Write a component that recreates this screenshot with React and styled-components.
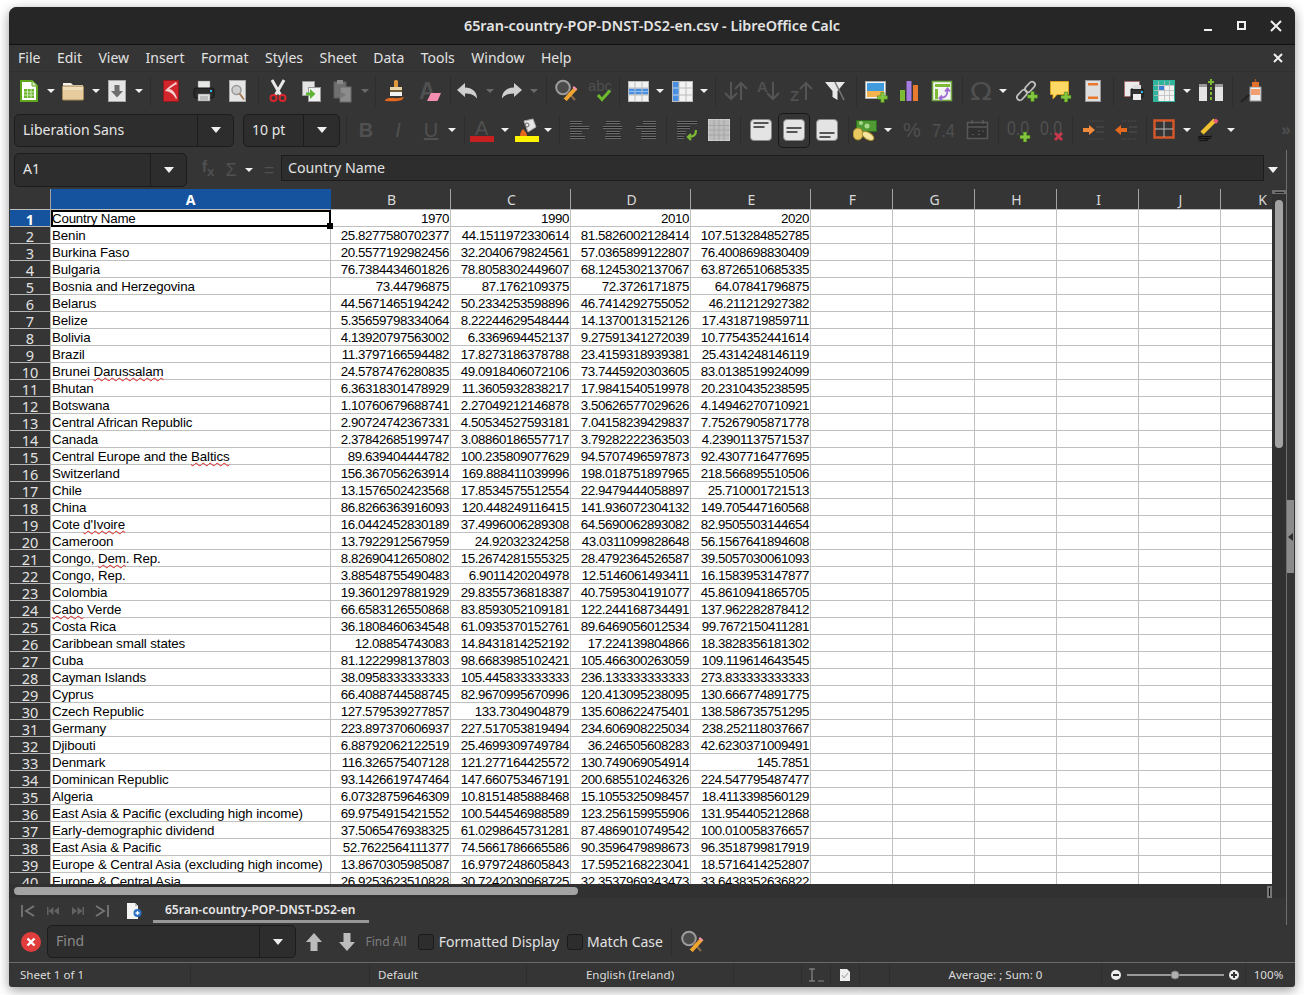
import React from 'react';
import styled, { createGlobalStyle } from 'styled-components';

const UI_FONT = '"Noto Sans", "Open Sans", sans-serif';

const GlobalStyle = createGlobalStyle`
    html, body { margin: 0; background: #fff; height: 100%; overflow: hidden; }
    body { font-family: ${UI_FONT}; }
`;

const Window = styled.div`
    width: 1286px;
    height: 980px;
    margin: 7px 0 0 9px;
    background: #353535;
    border-radius: 8px 8px 3px 3px;
    box-shadow: 0 3px 12px rgba(0, 0, 0, 0.4);
    display: flex;
    flex-direction: column;
    overflow: hidden;
    color: #eee;
`;

const TitleBar = styled.div`
    height: 37px;
    flex: none;
    background: #262626;
    border-bottom: 1px solid #111;
    position: relative;
    display: flex;
    align-items: center;
    justify-content: center;
    font-size: 14.4px;
    font-weight: 600;
    color: #e4e4e4;
`;
const WinControls = styled.div`
    position: absolute;
    right: 12px;
    top: 12px;
    display: flex;
    gap: 20px;
`;
const MenuBar = styled.div`
    height: 25px;
    padding: 0 10px 1px 9px;
    flex: none;
    display: flex;
    align-items: center;
    gap: 16.5px;
    font-size: 14px;
    color: #e2e2e2;
    border-bottom: 1px solid #2f2f2f;
`;
const MenuClose = styled.div`
    margin-left: auto;
    margin-right: 1px;
    display: flex;
`;
const ToolRow = styled.div`
    height: ${p => p.$h}px;
    flex: none;
    box-sizing: border-box;
    display: flex;
    align-items: center;
    padding-left: ${p => p.$pad || 0}px;
    padding-bottom: ${p => p.$bottom || 0}px;
`;
const Slot = styled.div`
    flex: none;
    width: ${p => p.$w}px;
    margin-left: ${p => p.$gap}px;
    display: flex;
    align-items: center;
    justify-content: center;
    white-space: nowrap;
`;
const Caret = styled.div`
    width: 0;
    height: 0;
    border-left: 4px solid transparent;
    border-right: 4px solid transparent;
    border-top: 4px solid ${p => (p.$off ? '#6a6a6a' : '#f0f0f0')};
`;
const CaretOff = () => <Caret $off />;
const Sep = styled.div`
    width: 1px;
    height: 30px;
    background: #2d2d2d;
`;
const Glyph = styled.span`
    font-family: "Liberation Sans", sans-serif;
    font-size: ${p => p.$size || 20}px;
    font-weight: ${p => p.$weight || 400};
    font-style: ${p => p.$italic ? 'italic' : 'normal'};
    text-decoration: ${p => p.$under ? 'underline' : 'none'};
    color: #505050;
    line-height: 24px;
`;
const Combo = styled.div`
    height: ${p => p.$h || 33}px;
    width: ${p => p.$w}px;
    flex: none;
    box-sizing: border-box;
    display: flex;
    background: #2d2d2d;
    border: 1px solid #1c1c1c;
    border-radius: 5px;
    margin-left: ${p => p.$ml || 0}px;
`;
const ComboText = styled.div`
    flex: 1;
    min-width: 0;
    padding: 0 0 2px 8px;
    display: flex;
    align-items: center;
    font-size: 14px;
    color: ${p => p.$dim ? '#8a8a8a' : '#e6e6e6'};
`;
const ComboButton = styled.div`
    width: 35px;
    flex: none;
    border-left: 1px solid #1c1c1c;
    display: flex;
    align-items: center;
    justify-content: center;
`;
const BigCaret = styled(Caret)`
    border-left-width: 5.5px;
    border-right-width: 5.5px;
    border-top-width: 6px;
`;

const MainRow = styled.div`
    flex: none;
    display: flex;
    height: 775px;
`;
const MainColumn = styled.div`
    width: 1277px;
    flex: none;
    display: flex;
    flex-direction: column;
`;
const SideStrip = styled.div`
    flex: 1;
    border-left: 1px solid #6f6f6f;
    padding-top: 350px;
`;
const SideHandle = styled.div`
    width: 7px;
    height: 73px;
    background: #8b8b8b;
    display: flex;
    align-items: center;
    justify-content: center;
    &::before {
        content: '';
        border-top: 4px solid transparent;
        border-bottom: 4px solid transparent;
        border-right: 5px solid #2c2c2c;
    }
`;
const FormulaInput = styled.div`
    height: 26px;
    width: 983px;
    flex: none;
    box-sizing: border-box;
    margin: 0 0 3px 5px;
    background: #2d2d2d;
    border: 1px solid #1c1c1c;
    padding: 0 0 2px 6px;
    display: flex;
    align-items: center;
    font-size: 14.2px;
    color: #e2e2e2;
`;
const SheetRow = styled.div`
    height: 695px;
    flex: none;
    display: flex;
    padding-left: 1px;
`;
const Sheet = styled.div`
    width: 1262px;
    height: 695px;
    overflow: hidden;
    display: grid;
    grid-template-columns: 41px 280px repeat(4, 120px) repeat(6, 82px);
    grid-template-rows: 21px;
    grid-auto-rows: 17px;
    background: #fff;
`;
const ColHead = styled.div`
    box-sizing: border-box;
    background: ${p => (p.$active ? '#15539e' : '#353535')};
    color: ${p => (p.$active ? '#fff' : '#d8d8d8')};
    font-weight: ${p => (p.$active ? 700 : 400)};
    border-right: 1px solid ${p => (p.$active ? '#15539e' : '#a2a2a2')};
    border-bottom: 1px solid #bdbdbd;
    padding-left: ${p => (p.$active ? 0 : 2)}px;
    font-size: 14px;
    display: flex;
    align-items: center;
    justify-content: center;
`;
const RowHead = styled.div`
    box-sizing: border-box;
    background: ${p => (p.$active ? '#15539e' : '#353535')};
    color: ${p => (p.$active ? '#fff' : '#e2e2e2')};
    font-weight: ${p => (p.$active ? 700 : 400)};
    border-right: 1px solid #b5b5b5;
    border-bottom: 1px solid #b5b5b5;
    padding-top: 2px;
    font-size: 14.5px;
    line-height: 14px;
    text-align: center;
    overflow: hidden;
`;
const Cell = styled.div`
    box-sizing: border-box;
    border-right: 1px solid #c0c0c0;
    border-bottom: 1px solid #c0c0c0;
    font-family: "Liberation Sans", Arial, sans-serif;
    font-size: 13.33px;
    letter-spacing: ${p => (p.$num ? -0.41 : -0.11)}px;
    line-height: 17px;
    height: 17px;
    color: #000;
    padding: 0 1px;
    white-space: nowrap;
    text-align: ${p => (p.$num ? 'right' : 'left')};
    overflow: ${p => (p.$num ? 'hidden' : 'visible')};
    display: ${p => (p.$num ? 'flex' : 'block')};
    justify-content: flex-end;
`;
const CursorCell = styled(Cell)`
    border: 2px solid #000;
    position: relative;
    line-height: 14px;
    padding-left: 0;
    text-indent: -1px;
    letter-spacing: -0.2px;
    &::after {
        content: '';
        position: absolute;
        right: -4px;
        bottom: -4px;
        width: 6px;
        height: 6px;
        background: #000;
    }
`;
const Misspelt = styled.span`
    text-decoration: underline wavy #e02020 1px;
    text-underline-offset: 1px;
`;
const VScroll = styled.div`
    width: 14px;
    flex: none;
    background: #313131;
    padding-top: 1px;
    display: flex;
    flex-direction: column;
`;
const SplitTop = styled.div`
    height: 4px;
    width: 14px;
    background: #6e6e6e;
    display: flex;
    align-items: center;
    justify-content: center;
    &::before { content: ''; width: 9px; height: 1px; background: #222; }
`;
const VThumb = styled.div`
    width: 8px;
    height: 248px;
    margin: 6px 0 0 3px;
    background: #a3a3a3;
    border-radius: 4px;
`;
const HScrollRow = styled.div`
    height: 14px;
    flex: none;
    position: relative;
    background: #313131;
    display: flex;
    align-items: center;
    padding-left: 5px;
`;
const HThumb = styled.div`
    width: 564px;
    height: 8px;
    background: #a3a3a3;
    border-radius: 4px;
`;
const HSplit = styled.div`
    position: absolute;
    right: 14px;
    top: 2px;
    width: 5px;
    height: 12px;
    background: #777;
    display: flex;
    align-items: center;
    justify-content: center;
    &::before { content: ''; width: 1px; height: 8px; background: #111; }
`;
const Tab = styled.div`
    height: 25px;
    box-sizing: border-box;
    width: 216px;
    border-bottom: 3px solid #989898;
    font-size: 12px;
    font-weight: 600;
    color: #e8e8e8;
    display: flex;
    align-items: center;
    padding-left: 12px;
`;
const FindLabel = styled.span`
    font-size: ${p => p.$size || 14}px;
    color: ${p => p.$dim ? '#7d7d7d' : '#e2e2e2'};
`;
const Checkbox = styled.div`
    width: 16px;
    height: 16px;
    box-sizing: border-box;
    background: #2d2d2d;
    border: 1px solid #1a1a1a;
    border-radius: 3px;
`;
const FindBar = styled(ToolRow)`
    border-bottom: 1px solid #6a6a6a;
`;
const StatusBar = styled.div`
    flex: 1;
    display: flex;
    align-items: stretch;
    font-size: 11.6px;
    color: #dcdcdc;
    padding-bottom: 1px;
`;
const StatusCell = styled.div`
    width: ${p => p.$w}px;
    flex: none;
    box-sizing: border-box;
    padding-left: ${p => p.$pad || 0}px;
    padding-right: ${p => (p.$last ? 4 : 0)}px;
    display: flex;
    align-items: center;
    justify-content: ${p => p.$center ? 'center' : 'flex-start'};
    border-right: ${p => p.$last ? 'none' : '1px solid #2e2e2e'};
    white-space: nowrap;
`;

const Svg = ({ w = 24, h = 24, children }) => (
    <svg width={w} height={h} viewBox={`0 0 ${w} ${h}`} style={{ display: 'block', flex: 'none' }}>{children}</svg>
);

// cruzinha verde que vai em cima de varios icones
const Plus = ({ x, y, c = '#84c63f' }) => (
    <path d={`M${x - 1.7} ${y - 5}h3.4v3.3h3.3v3.4h-3.3v3.3h-3.4v-3.3h-3.3v-3.4h3.3z`} fill={c} stroke="#3f7d12" strokeWidth=".5" />
);
const SvgText = ({ x, y, size, bold, fill = '#505050', family = 'Liberation Sans', fit, children }) => (
    <text x={x} y={y} fontSize={size} fontWeight={bold ? 700 : 400} fontFamily={`${family}, sans-serif`} fill={fill} textLength={fit} lengthAdjust={fit ? 'spacingAndGlyphs' : undefined}>{children}</text>
);

const NewCalc = () => <Svg><path d="M4 2h11l5 5v15H4z" fill="#fff" stroke="#5fa61c" strokeWidth="2" /><path d="M15 2v5h5" fill="#dcecc4" stroke="#5fa61c" /><rect x="7" y="10" width="10" height="9" fill="#6ab52b" /><path d="M7 13h10M7 16h10M10.5 10v9M14 10v9" stroke="#e4f3d2" strokeWidth=".8" /></Svg>;
const OpenFolder = () => <Svg><path d="M2 4h8l2 2h10v3H2z" fill="#f6f2e8" /><rect x="1.5" y="7" width="21" height="14" rx="1" fill="#e6cc9c" stroke="#a78c5e" /><rect x="2" y="8" width="20" height="3" fill="#f0deba" /></Svg>;
const SaveDoc = () => <Svg><rect x="3.5" y="1.5" width="17" height="21" fill="#e6e6e6" stroke="#a8a8a8" /><path d="M9.5 6h5v6h3.5l-6 6.5L6 12h3.5z" fill="#6e6e6e" /></Svg>;
const PdfDoc = () => <Svg><rect x="4.5" y="1.5" width="15" height="21" fill="#d1262b" stroke="#8f1a1e" /><path d="M17 3C11 7 8 9 6 12c4 0 9 3 11 8l1-1c-2-6-5-9-8-9 3-2 5-4 8-5z" fill="#f4d0d0" /></Svg>;
const PrintDoc = () => <Svg><rect x="6" y="2" width="12" height="8" fill="#e8e8e8" stroke="#777" strokeWidth=".5" /><rect x="2" y="9" width="20" height="10" rx="2" fill="#2b2b2b" stroke="#151515" /><rect x="6" y="15" width="12" height="7" fill="#ddd" stroke="#777" strokeWidth=".5" /><path d="M8 18h8M8 20h8" stroke="#999" /><rect x="18" y="11" width="2" height="2" fill="#29b6e8" /></Svg>;
const Preview = () => <Svg><rect x="4.5" y="1.5" width="16" height="21" fill="#e6e6e6" stroke="#aaa" /><circle cx="11.5" cy="11" r="4.5" fill="#cfcfcf" stroke="#999" strokeWidth="1.5" /><path d="M14.5 14.5l4.5 6" stroke="#a58058" strokeWidth="2" /></Svg>;
const Scissors = () => <Svg><path d="M6 1l8.5 15M18 1L9.500 16" stroke="#e8e8e8" strokeWidth="3" /><circle cx="7.500" cy="19" r="3" fill="none" stroke="#d8262c" strokeWidth="2" /><circle cx="16.500" cy="19" r="3" fill="none" stroke="#d8262c" strokeWidth="2" /></Svg>;
const CopyDoc = () => <Svg><rect x="3.500" y="2.500" width="12" height="14" fill="#e4e4e4" stroke="#999" /><rect x="9.500" y="8.500" width="12" height="14" fill="#f2f2f2" stroke="#999" /><path d="M7 13.500h4V10l5.500 5-5.500 5v-3.500H7z" fill="#5fb336" /></Svg>;
const PasteDoc = () => <Svg><rect x="4" y="3" width="12" height="16" fill="#707070" stroke="#5e5e5e" /><rect x="7" y="1" width="6" height="4" fill="#8a8a8a" /><rect x="10" y="8" width="11" height="15" fill="#8c8c8c" stroke="#6a6a6a" /><path d="M11 13v6l5-3z" fill="#777" /></Svg>;
const Clone = () => <Svg><rect x="10" y="1" width="4" height="8" rx="1.500" fill="#e09a3b" /><rect x="6" y="8" width="12" height="3" fill="#e6d4a8" /><rect x="6" y="11" width="12" height="2" fill="#6d5a38" /><rect x="6" y="13" width="12" height="4" fill="#f2f2f2" /><path d="M1 21c5-4 9 0 19-3l-2 3c-6 2-12 1-17 1z" fill="#e2691e" /></Svg>;
const ClearFmt = () => <Svg><SvgText x="1" y="20" size="23" bold>A</SvgText><path d="M13 14h10l-3.500 8H9z" fill="#f48fb1" /></Svg>;
const Undo = () => <Svg><path d="M2 11l8-7v4.500c7 0 12 4 12 11-3-4-7-5-12-5V18z" fill="#cfcfcf" /></Svg>;
const Redo = () => <Svg><path d="M22 11l-8-7v4.500c-7 0-12 4-12 11 3-4 7-5 12-5V18z" fill="#cfcfcf" /></Svg>;
const FindReplace = () => <Svg><circle cx="9" cy="8.500" r="6.800" fill="#8a8a8a44" stroke="#9c9c9c" strokeWidth="2" /><path d="M14 13l7 8" stroke="#8a6a4a" strokeWidth="2" /><path d="M22 9L11 21" stroke="#f0a52e" strokeWidth="4" /><path d="M20 7l3 3-1.500 1.500-3-3z" fill="#f48fb1" /><path d="M9.500 19.500l3 2.500-4 1z" fill="#333" /></Svg>;
const Spell = () => <Svg><SvgText x="0" y="12" size="14" fit={24}>abc</SvgText><path d="M10 16l4 4.500 8-9" fill="none" stroke="#6dbb2c" strokeWidth="3" /></Svg>;
const TableRows = () => <Svg><rect x="2.500" y="2.500" width="20" height="20" fill="#f2f2f2" stroke="#bbb" /><rect x="3" y="9.500" width="19" height="6" fill="#4a90e2" /><path d="M2.500 9h20M2.500 16h20M9 2.500v20M16 2.500v20" stroke="#bbb" /><path d="M3 12.500h19" stroke="#8fc0f5" /></Svg>;
const TableCols = () => <Svg><rect x="2.500" y="2.500" width="20" height="20" fill="#f2f2f2" stroke="#bbb" /><rect x="3" y="3" width="6" height="19" fill="#4a90e2" /><path d="M2.500 9h20M2.500 16h20M9 2.500v20M16 2.500v20" stroke="#bbb" /><path d="M3 9h6M3 16h6" stroke="#8fc0f5" /></Svg>;
const DimDown = ({ x }) => <path d={`M${x} 3v17M${x - 6} 14l6 6 6-6`} fill="none" stroke="#555" strokeWidth="2" />;
const DimUp = ({ x }) => <path d={`M${x} 21V4M${x - 6} 10l6-6 6 6`} fill="none" stroke="#555" strokeWidth="2" />;
const SortBoth = () => <Svg><DimDown x={7} /><DimUp x={17} /></Svg>;
const SortAsc = () => <Svg><SvgText x="0" y="13" size="15" bold>A</SvgText><DimDown x={16} /></Svg>;
const SortDesc = () => <Svg><SvgText x="0" y="22" size="15" bold>Z</SvgText><DimUp x={16} /></Svg>;
const Filter = () => <Svg><path d="M2 3h20l-7.500 9v9l-5-3v-6z" fill="#e8e8e8" /><path d="M12 3l9 18" stroke="#777" strokeWidth="1.500" /></Svg>;
const InsertImage = () => <Svg><rect x="1.500" y="2.500" width="20" height="17" fill="#f4f4f4" stroke="#aaa" /><rect x="3" y="4" width="17" height="8" fill="#3f9bdc" /><rect x="3" y="12" width="17" height="6" fill="#f2b24e" /><Plus x={18.500} y={18.500} /></Svg>;
const Chart = () => <Svg><rect x="3" y="11" width="5" height="11" fill="#7dbb35" /><rect x="9.500" y="2" width="5" height="20" fill="#a67be0" /><rect x="16" y="6" width="5" height="16" fill="#e87a30" /></Svg>;
const Pivot = () => <Svg><rect x="2.500" y="2.500" width="19" height="19" fill="#f4f4f4" stroke="#6fa83c" strokeWidth="1.500" /><rect x="5" y="5" width="15" height="3" fill="#7dbb35" /><rect x="5" y="10" width="3" height="10" fill="#7dbb35" /><path d="M10 19c6 0 7.500-3 7.500-8M15 12.500l2.500-3 2.500 3M12 16.500L9.500 19l2.500 2.500" fill="none" stroke="#9b6bd0" strokeWidth="1.800" /></Svg>;
const Omega = () => <Svg><SvgText x="1" y="21" size="25" family="DejaVu Sans" fit={22}>Ω</SvgText></Svg>;
const LinkIcon = () => <Svg><rect x="1" y="13" width="12" height="6" rx="3" fill="none" stroke="#bcbcbc" strokeWidth="1.800" transform="rotate(-48 7 16)" /><rect x="9" y="5" width="12" height="6" rx="3" fill="none" stroke="#bcbcbc" strokeWidth="1.800" transform="rotate(-48 15 8)" /><Plus x={17.500} y={17.500} /></Svg>;
const CommentIcon = () => <Svg><path d="M2.500 2.500h18v13H9L5 20v-4.500H2.500z" fill="#ffd966" stroke="#d9a520" /><Plus x={18} y={18} /></Svg>;
const HeaderIcon = () => <Svg><rect x="4.500" y="1.500" width="15" height="21" fill="#dedede" stroke="#999" /><rect x="7" y="4" width="10" height="2.500" fill="#e8762c" /><rect x="7" y="17.500" width="10" height="2.500" fill="#e8762c" /></Svg>;
const PrintArea = () => <Svg><rect x="2.500" y="2.500" width="15" height="15" fill="#ebebeb" stroke="#c05050" strokeDasharray="1 1" /><path d="M9 10h12v8H9z" fill="#333" stroke="#1b1b1b" /><rect x="11" y="6" width="8" height="4" fill="#ddd" /><rect x="11" y="15" width="8" height="6" fill="#eee" /><rect x="19" y="12" width="2" height="2" fill="#29b6e8" /></Svg>;
const TealTable = () => <Svg><rect x="1.500" y="1.500" width="21" height="21" fill="#f2f2f2" stroke="#2fb39b" /><rect x="2" y="2" width="20" height="4" fill="#2fb39b" /><rect x="2" y="6" width="4" height="16" fill="#2fb39b" /><rect x="7" y="7" width="5" height="4" fill="#3b7fd4" /><path d="M2 6.500h20M2 11.500h20M2 16.500h20M6.500 2v20M12.500 2v20M17.500 2v20" stroke="#bdbdbd" strokeWidth=".8" /></Svg>;
const SplitIcon = () => <Svg><rect x="0" y="5" width="8" height="17" fill="#e4e4e4" /><rect x="0" y="5" width="8" height="3" fill="#999" /><rect x="16" y="5" width="8" height="17" fill="#e4e4e4" /><rect x="16" y="5" width="8" height="3" fill="#999" /><path d="M12 8v14" stroke="#7dbb35" strokeWidth="2" strokeDasharray="3 2" /><path d="M12 0v6M9 3h6" stroke="#7dbb35" strokeWidth="2" /></Svg>;
const StylesIcon = () => <Svg><rect x="10" y="8" width="11" height="14" fill="#eee" stroke="#999" /><rect x="11" y="10" width="9" height="6" fill="#f0a070" /><rect x="12" y="3" width="7" height="5" fill="#e0702c" /><path d="M15.500 0v3" stroke="#a5512a" strokeWidth="1.500" /><path d="M1 23l8-7" stroke="#222" strokeWidth="2" /></Svg>;

const ColorA = () => <Svg><SvgText x="5" y="17" size="20">A</SvgText><rect x="0" y="18" width="24" height="6" fill="#c82020" /></Svg>;
const Bucket = () => <Svg><path d="M9 3l9-2 3 8-8 5z" fill="#e6e6e6" stroke="#aaa" /><circle cx="12" cy="7" r="2" fill="none" stroke="#666" /><path d="M8 11c2 2 4 4 4 7H5c0-3 1-5 3-7z" fill="#e2691e" /><rect x="0" y="18" width="24" height="6" fill="#fdf200" /></Svg>;
const lines = (spec) => spec.map(([x, y, w], i) => <path key={i} d={`M${x} ${y + 0.5}h${w}`} stroke="#6a6a6a" strokeWidth="3" />);
const linesIn = (spec) => spec.map(([x, y, w], i) => <path key={i} d={`M${x} ${y + 0.5}h${w}`} stroke="#1b1b1b" strokeWidth="1" />);
const AlignIcon = ({ spec }) => <Svg>{lines(spec)}{linesIn(spec)}</Svg>;
const AlignLeft = () => <AlignIcon spec={[[2, 4, 12], [2, 9, 19], [2, 14, 12], [2, 19, 15]]} />;
const AlignCenter = () => <AlignIcon spec={[[5, 4, 14], [2, 9, 19], [5, 14, 14], [4, 19, 16]]} />;
const AlignRight = () => <AlignIcon spec={[[9, 4, 13], [2, 9, 20], [7, 14, 15], [7, 19, 15]]} />;
const WrapIcon = () => <Svg>{lines([[2, 4, 20], [2, 9, 13], [2, 14, 9], [2, 19, 7]])}{linesIn([[2, 4, 20], [2, 9, 13], [2, 14, 9], [2, 19, 7]])}<path d="M21 12c0 5-3 7-7 7M16 16l-3 3 3 3" fill="none" stroke="#7dbb35" strokeWidth="2.200" /></Svg>;
const Merge = () => <Svg><rect x="1.500" y="1.500" width="21" height="21" fill="#bdbdbd" stroke="#cfcfcf" /><path d="M1.500 7.500h21M1.500 12h21M1.500 17h21M7 1.500v21M12 1.500v21M17 1.500v21" stroke="#a6a6a6" /></Svg>;
const VAlign = ({ y }) => <Svg><rect x="1.500" y="1.500" width="21" height="21" rx="3.500" fill="#e4e4e4" stroke="#8a8a8a" /><path d={`M4.500 ${y}h15M4.500 ${y + 4}h11`} stroke="#555" strokeWidth="2" /></Svg>;
const VTop = () => <VAlign y={5} />;
const VMid = () => <VAlign y={10} />;
const VBot = () => <VAlign y={15} />;
const ActiveFrame = styled.div`
    width: 32px;
    height: 33px;
    border: 1px solid #181818;
    border-radius: 5px;
    display: flex;
    align-items: center;
    justify-content: center;
`;
const VMidActive = () => <ActiveFrame><VMid /></ActiveFrame>;
const Currency = () => <Svg><rect x="3.500" y="2.500" width="20" height="11" fill="#4f9a34" stroke="#2f6b1c" /><circle cx="8" cy="5" r="2" fill="#a8d88a" /><circle cx="14" cy="8" r="2.500" fill="#a8d88a" /><ellipse cx="5" cy="16" rx="5" ry="6" fill="#e8c860" stroke="#a98c2c" /><ellipse cx="15" cy="18" rx="6.500" ry="3.500" fill="#f4e6a0" transform="rotate(30 15 18)" stroke="#a98c2c" /></Svg>;
const Percent = () => <Glyph $size={20}>%</Glyph>;
const NumFmt = () => <Svg w={26} h={24}><SvgText x="0" y="19" size="19" fit={23}>7.4</SvgText></Svg>;
const DateIcon = () => <Svg><rect x="1.500" y="4.500" width="20" height="16" fill="#2f2f2f" stroke="#585858" strokeWidth="1.500" /><path d="M6 2v4M17 2v4M2 9h19" stroke="#585858" strokeWidth="1.500" /><path d="M12 13h2M16 13h2M6 16.500h2M12 16.500h2" stroke="#585858" /></Svg>;
const AddDecimal = () => <Svg><SvgText x="0" y="17" size="20" fit={22}>0.0</SvgText><Plus x={18} y={19} /></Svg>;
const DelDecimal = () => <Svg><SvgText x="0" y="17" size="20" fit={22}>0.0</SvgText><path d="M15 15l7 7M22 15l-7 7" stroke="#c8384c" strokeWidth="2.800" /></Svg>;
const Indent = () => <Svg><path d="M2 10h6V7l6 5-6 5v-3H2z" fill="#f08a3c" /><path d="M15 9h8M15 14h8" stroke="#666" strokeWidth="2" /><path d="M15 9h8M15 14h8" stroke="#1f1f1f" /><path d="M8 3h14M8 21h14" stroke="#4a4a4a" strokeDasharray="2 1" /></Svg>;
const Outdent = () => <Svg><path d="M13 10H7V7l-6 5 6 5v-3h6z" fill="#e2691e" /><path d="M15 9h8M15 14h8" stroke="#666" strokeWidth="2" /><path d="M15 9h8M15 14h8" stroke="#1f1f1f" /><path d="M8 3h14M8 21h14" stroke="#4a4a4a" strokeDasharray="2 1" /></Svg>;
const Borders = () => <Svg><rect x="2.500" y="2.500" width="19" height="17" fill="none" stroke="#d4562a" strokeWidth="2.500" /><path d="M12 3v16M3 11h18" stroke="#b8b8b8" strokeWidth="1" /></Svg>;
const LineIcon = () => <Svg><path d="M18 2L5 15" stroke="#f0c030" strokeWidth="4.500" /><path d="M16 3l3-2.500 2.500 2.500-2.500 3z" fill="#e85a7a" /><path d="M3 14l3 3-4 1z" fill="#333" /><path d="M1 19c4-2 8 1 14-1M1 21c4-2 8 1 13-1M2 23c3-1 6 0 9-1" fill="none" stroke="#111" strokeWidth="1.200" /></Svg>;

const NavFirst = () => <Svg w={16} h={16}><path d="M2 2v12M14 3L6 8l8 5" fill="none" stroke="#767676" strokeWidth="1.800" /></Svg>;
const NavPrev = () => <Svg w={16} h={16}><path d="M2 4h1.500v8H2zM8.500 4v8L3.500 8zM14 4v8L9 8z" fill="#626262" /></Svg>;
const NavNext = () => <Svg w={16} h={16}><path d="M14 4h-1.500v8H14zM7.500 4v8l5-4zM2 4v8l5-4z" fill="#626262" /></Svg>;
const NavLast = () => <Svg w={16} h={16}><path d="M14 2v12M2 3l8 5-8 5" fill="none" stroke="#767676" strokeWidth="1.800" /></Svg>;
const NewSheet = () => <Svg w={16} h={16}><path d="M1 0h8l3 3v13H1z" fill="#f4f4f4" /><path d="M9 0v3h3" fill="#bbb" /><circle cx="11.500" cy="10" r="4" fill="#2a6fc0" /><path d="M11.500 8v4M9.500 10h4" stroke="#fff" strokeWidth="1.300" /></Svg>;
const CloseFind = () => <Svg w={20} h={20}><circle cx="10" cy="10" r="10" fill="#e23d3d" /><path d="M6.500 6.500l7 7M13.500 6.500l-7 7" stroke="#fff" strokeWidth="2.400" /></Svg>;
const ArrowUp = () => <Svg w={18} h={20}><path d="M9 1l8 9h-4.500v9h-7v-9H1z" fill="#bcbcbc" /></Svg>;
const ArrowDown = () => <Svg w={18} h={20}><path d="M9 19l8-9h-4.500V1h-7v9H1z" fill="#bcbcbc" /></Svg>;

const CloseX = ({ s = 12 }) => <Svg w={s} h={s}><path d={`M2 2L${s - 2} ${s - 2}M${s - 2} 2L2 ${s - 2}`} stroke="#f0f0f0" strokeWidth="2" /></Svg>;
const MinBtn = () => <Svg w={14} h={14}><rect x="3" y="10" width="8" height="2" fill="#f0f0f0" /></Svg>;
const MaxBtn = () => <Svg w={14} h={14}><rect x="3" y="3" width="7" height="7" fill="none" stroke="#f0f0f0" strokeWidth="2" /></Svg>;

const FxText = () => <Glyph $size={16} $weight={700}>f<sub>x</sub></Glyph>;
const SumText = () => <Glyph $size={18}>Σ</Glyph>;
const EqText = () => <Glyph $size={18}>=</Glyph>;
const BoldBtn = () => <Glyph $weight={700}>B</Glyph>;
const ItalicBtn = () => <Glyph $italic>I</Glyph>;
const UnderBtn = () => <Glyph $under>U</Glyph>;

const OverflowMark = () => <Glyph $size={17} $weight={700}>»</Glyph>;

// coloca os items em fluxo, com o espaco calculado a partir do centro de cada um
const Flow = ({ start, items }) => {
    let cursor = start;
    return items.map(([Comp, x, w = 24], i) => {
        const gap = x - w / 2 - cursor;
        cursor = x + w / 2;
        return <Slot key={i} $w={w} $gap={gap}><Comp /></Slot>;
    });
};

const tools1 = [
    [NewCalc, 29], [Caret, 51, 8], [OpenFolder, 73], [Caret, 96, 8], [SaveDoc, 117], [Caret, 139, 8], [Sep, 150, 1],
    [PdfDoc, 171], [PrintDoc, 204], [Preview, 237], [Sep, 258, 1],
    [Scissors, 278], [CopyDoc, 311], [PasteDoc, 342], [CaretOff, 365, 8], [Sep, 375, 1],
    [Clone, 396], [ClearFmt, 430], [Sep, 450, 1],
    [Undo, 467], [CaretOff, 490, 8], [Redo, 512], [CaretOff, 534, 8], [Sep, 546, 1],
    [FindReplace, 566], [Spell, 600], [Sep, 619, 1],
    [TableRows, 638], [Caret, 660, 8], [TableCols, 682], [Caret, 704, 8], [Sep, 715, 1],
    [SortBoth, 736], [SortAsc, 769], [SortDesc, 802], [Filter, 835], [Sep, 856, 1],
    [InsertImage, 876], [Chart, 909], [Pivot, 942], [Sep, 962, 1],
    [Omega, 981], [Caret, 1003, 8], [LinkIcon, 1027], [CommentIcon, 1060], [HeaderIcon, 1093], [Sep, 1113, 1],
    [PrintArea, 1134], [TealTable, 1164], [Caret, 1187, 8], [SplitIcon, 1211], [Sep, 1232, 1],
    [StylesIcon, 1252],
];

const tools2 = [
    [Sep, 346, 1], [BoldBtn, 366, 16], [ItalicBtn, 398, 16], [UnderBtn, 431, 16], [Caret, 452, 8], [Sep, 464, 1],
    [ColorA, 482], [Caret, 505, 8], [Bucket, 527], [Caret, 548, 8], [Sep, 559, 1],
    [AlignLeft, 580], [AlignCenter, 613], [AlignRight, 646], [Sep, 666, 1],
    [WrapIcon, 687], [Merge, 719], [Sep, 740, 1],
    [VTop, 761], [VMidActive, 794, 32], [VBot, 827], [Sep, 848, 1],
    [Currency, 865], [Caret, 888, 8], [Percent, 912, 20], [NumFmt, 945, 26], [DateIcon, 978], [Sep, 998, 1],
    [AddDecimal, 1019], [DelDecimal, 1052], [Sep, 1072, 1],
    [Indent, 1093], [Outdent, 1126], [Sep, 1146, 1],
    [Borders, 1164], [Caret, 1187, 8], [LineIcon, 1209], [Caret, 1231, 8],
    [OverflowMark, 1286, 12],
];

const formulaTools = [[FxText, 208, 18], [SumText, 231, 14], [Caret, 249, 8], [EqText, 269, 14]];

const FindField = () => (
    <Combo $w={249}>
        <ComboText $dim>Find</ComboText>
        <ComboButton><BigCaret /></ComboButton>
    </Combo>
);
const FindAllLabel = () => <FindLabel $dim $size={12}>Find All</FindLabel>;
const FormattedLabel = () => <FindLabel>Formatted Display</FindLabel>;
const MatchLabel = () => <FindLabel>Match Case</FindLabel>;

const findItems = [
    [CloseFind, 31, 20], [FindField, 171.5, 249], [ArrowUp, 314, 18], [ArrowDown, 347, 18], [FindAllLabel, 386, 44],
    [Checkbox, 426, 16], [FormattedLabel, 499, 124], [Checkbox, 575, 16], [MatchLabel, 625, 80], [Sep, 671, 1], [FindReplace, 692],
];

const FirstTab = () => <Tab>65ran-country-POP-DNST-DS2-en</Tab>;
const tabItems = [[NavFirst, 28, 16], [NavPrev, 53, 16], [NavNext, 78, 16], [NavLast, 102, 16], [NewSheet, 134, 16], [FirstTab, 261, 216]];

const columns = ['A', 'B', 'C', 'D', 'E', 'F', 'G', 'H', 'I', 'J', 'K'];

const rows = [
    [<>Benin</>, '25.8277580702377', '44.1511972330614', '81.5826002128414', '107.513284852785'],
    [<>Burkina Faso</>, '20.5577192982456', '32.2040679824561', '57.0365899122807', '76.4008698830409'],
    [<>Bulgaria</>, '76.7384434601826', '78.8058302449607', '68.1245302137067', '63.8726510685335'],
    [<>Bosnia and Herzegovina</>, '73.44796875', '87.1762109375', '72.3726171875', '64.07841796875'],
    [<>Belarus</>, '44.5671465194242', '50.2334253598896', '46.7414292755052', '46.211212927382'],
    [<>Belize</>, '5.35659798334064', '8.22244629548444', '14.1370013152126', '17.4318719859711'],
    [<>Bolivia</>, '4.13920797563002', '6.3369694452137', '9.27591341272039', '10.7754352441614'],
    [<>Brazil</>, '11.3797166594482', '17.8273186378788', '23.4159318939381', '25.4314248146119'],
    [<>Brunei <Misspelt>Darussalam</Misspelt></>, '24.5787476280835', '49.0918406072106', '73.7445920303605', '83.0138519924099'],
    [<>Bhutan</>, '6.36318301478929', '11.3605932838217', '17.9841540519978', '20.2310435238595'],
    [<>Botswana</>, '1.10760679688741', '2.27049212146878', '3.50626577029626', '4.14946270710921'],
    [<>Central African Republic</>, '2.90724742367331', '4.50534527593181', '7.04158239429837', '7.75267905871778'],
    [<>Canada</>, '2.37842685199747', '3.08860186557717', '3.79282222363503', '4.23901137571537'],
    [<>Central Europe and the <Misspelt>Baltics</Misspelt></>, '89.639404444782', '100.235809077629', '94.5707496597873', '92.4307716477695'],
    [<>Switzerland</>, '156.367056263914', '169.888411039996', '198.018751897965', '218.566895510506'],
    [<>Chile</>, '13.1576502423568', '17.8534575512554', '22.9479444058897', '25.710001721513'],
    [<>China</>, '86.8266363916093', '120.448249116415', '141.936072304132', '149.705447160568'],
    [<>Cote <Misspelt>d'Ivoire</Misspelt></>, '16.0442452830189', '37.4996006289308', '64.5690062893082', '82.9505503144654'],
    [<>Cameroon</>, '13.7922912567959', '24.92032324258', '43.0311099828648', '56.1567641894608'],
    [<>Congo, <Misspelt>Dem</Misspelt>. Rep.</>, '8.82690412650802', '15.2674281555325', '28.4792364526587', '39.5057030061093'],
    [<>Congo, Rep.</>, '3.88548755490483', '6.9011420204978', '12.5146061493411', '16.1583953147877'],
    [<>Colombia</>, '19.3601297881929', '29.8355736818387', '40.7595304191077', '45.8610941865705'],
    [<><Misspelt>Cabo</Misspelt> Verde</>, '66.6583126550868', '83.8593052109181', '122.244168734491', '137.962282878412'],
    [<>Costa Rica</>, '36.1808460634548', '61.0935370152761', '89.6469056012534', '99.7672150411281'],
    [<>Caribbean small states</>, '12.08854743083', '14.8431814252192', '17.224139804866', '18.3828356181302'],
    [<>Cuba</>, '81.1222998137803', '98.6683985102421', '105.466300263059', '109.119614643545'],
    [<>Cayman Islands</>, '38.0958333333333', '105.445833333333', '236.133333333333', '273.833333333333'],
    [<>Cyprus</>, '66.4088744588745', '82.9670995670996', '120.413095238095', '130.666774891775'],
    [<>Czech Republic</>, '127.579539277857', '133.7304904879', '135.608622475401', '138.586735751295'],
    [<>Germany</>, '223.897370606937', '227.517053819494', '234.606908225034', '238.252118037667'],
    [<>Djibouti</>, '6.88792062122519', '25.4699309749784', '36.246505608283', '42.6230371009491'],
    [<>Denmark</>, '116.326575407128', '121.277164425572', '130.749069054914', '145.7851'],
    [<>Dominican Republic</>, '93.1426619747464', '147.660753467191', '200.685510246326', '224.547795487477'],
    [<>Algeria</>, '6.07328759646309', '10.8151485888468', '15.1055325098457', '18.4113398560129'],
    [<>East Asia &amp; Pacific (excluding high income)</>, '69.9754915421552', '100.544546988589', '123.256159955906', '131.954405212868'],
    [<>Early-demographic dividend</>, '37.5065476938325', '61.0298645731281', '87.4869010749542', '100.010058376657'],
    [<>East Asia &amp; Pacific</>, '52.7622564111377', '74.5661786665586', '90.3596479898673', '96.3518799817919'],
    [<>Europe &amp; Central Asia (excluding high income)</>, '13.8670305985087', '16.9797248605843', '17.5952168223041', '18.5716414252807'],
    [<>Europe &amp; Central Asia</>, '26.9253623510828', '30.7242030968725', '32.3537969343473', '33.6438352636822'],
];

const EmptyCells = () => Array.from({ length: 6 }, (_, i) => <Cell key={i} />);

const ZoomSlider = () => (
    <Svg w={144} h={14}>
        <circle cx="14" cy="7" r="5" fill="#eee" /><path d="M11 7h6" stroke="#333" strokeWidth="2" />
        <path d="M25 7h97" stroke="#9a9a9a" strokeWidth="2" />
        <circle cx="73" cy="7" r="4" fill="#b0b0b0" stroke="#777" />
        <circle cx="132" cy="7" r="5" fill="#eee" /><path d="M129 7h6M132 4v6" stroke="#333" strokeWidth="2" />
    </Svg>
);
const InsertMode = () => <Svg w={20} h={14}><path d="M3 1h6M3 13h6M6 1v12" stroke="#999" /><path d="M12 13h6" stroke="#888" /></Svg>;
const DocState = () => <Svg w={12} h={12}><path d="M1 0h7l3 3v9H1z" fill="#eee" /><path d="M3 6l2 3 4-5" fill="none" stroke="#999" /></Svg>;

export default function App() {
    return (
        <>
            <GlobalStyle />
            <Window>
                <TitleBar>
                    65ran-country-POP-DNST-DS2-en.csv - LibreOffice Calc
                    <WinControls><MinBtn /><MaxBtn /><CloseX s={14} /></WinControls>
                </TitleBar>
                <MenuBar>
                    {['File', 'Edit', 'View', 'Insert', 'Format', 'Styles', 'Sheet', 'Data', 'Tools', 'Window', 'Help'].map(m => <span key={m}>{m}</span>)}
                    <MenuClose><CloseX s={12} /></MenuClose>
                </MenuBar>
                <ToolRow $h={38}><Flow start={9} items={tools1} /></ToolRow>
                <ToolRow $h={40} $pad={5}>
                    <Combo $w={220}><ComboText>Liberation Sans</ComboText><ComboButton><BigCaret /></ComboButton></Combo>
                    <Combo $w={97} $ml={9}><ComboText>10 pt</ComboText><ComboButton><BigCaret /></ComboButton></Combo>
                    <Flow start={340} items={tools2} />
                </ToolRow>
                <MainRow>
                    <MainColumn>
                        <ToolRow $h={39} $pad={5}>
                            <Combo $w={173} $h={34}><ComboText>A1</ComboText><ComboButton><BigCaret /></ComboButton></Combo>
                            <Flow start={187} items={formulaTools} />
                            <FormulaInput>Country Name</FormulaInput>
                            <Slot $w={12} $gap={3}><BigCaret /></Slot>
                        </ToolRow>
                        <SheetRow>
                            <Sheet>
                                <ColHead />
                                {columns.map((c, i) => <ColHead key={c} $active={i === 0}>{c}</ColHead>)}
                                <RowHead $active>1</RowHead>
                                <CursorCell>Country Name</CursorCell>
                                {['1970', '1990', '2010', '2020'].map(y => <Cell key={y} $num>{y}</Cell>)}
                                <EmptyCells />
                                {rows.map((row, r) => (
                                    <React.Fragment key={r}>
                                        <RowHead>{r + 2}</RowHead>
                                        <Cell>{row[0]}</Cell>
                                        {row.slice(1).map((v, c) => <Cell key={c} $num>{v}</Cell>)}
                                        <EmptyCells />
                                    </React.Fragment>
                                ))}
                            </Sheet>
                            <VScroll><SplitTop /><VThumb /></VScroll>
                        </SheetRow>
                        <HScrollRow><HThumb /><HSplit /></HScrollRow>
                        <ToolRow $h={27} $bottom={2}><Flow start={9} items={tabItems} /></ToolRow>
                    </MainColumn>
                    <SideStrip><SideHandle /></SideStrip>
                </MainRow>
                <FindBar $h={38} $bottom={4}><Flow start={9} items={findItems} /></FindBar>
                <StatusBar>
                    <StatusCell $w={182} $pad={11}>Sheet 1 of 1</StatusCell>
                    <StatusCell $w={179} />
                    <StatusCell $w={157} $pad={8}>Default</StatusCell>
                    <StatusCell $w={207} $center>English (Ireland)</StatusCell>
                    <StatusCell $w={68} />
                    <StatusCell $w={29} $center><InsertMode /></StatusCell>
                    <StatusCell $w={29} $center><DocState /></StatusCell>
                    <StatusCell $w={30} />
                    <StatusCell $w={212} $center>Average: ; Sum: 0</StatusCell>
                    <StatusCell $w={144}><ZoomSlider /></StatusCell>
                    <StatusCell $w={49} $center $last>100%</StatusCell>
                </StatusBar>
            </Window>
        </>
    );
}
